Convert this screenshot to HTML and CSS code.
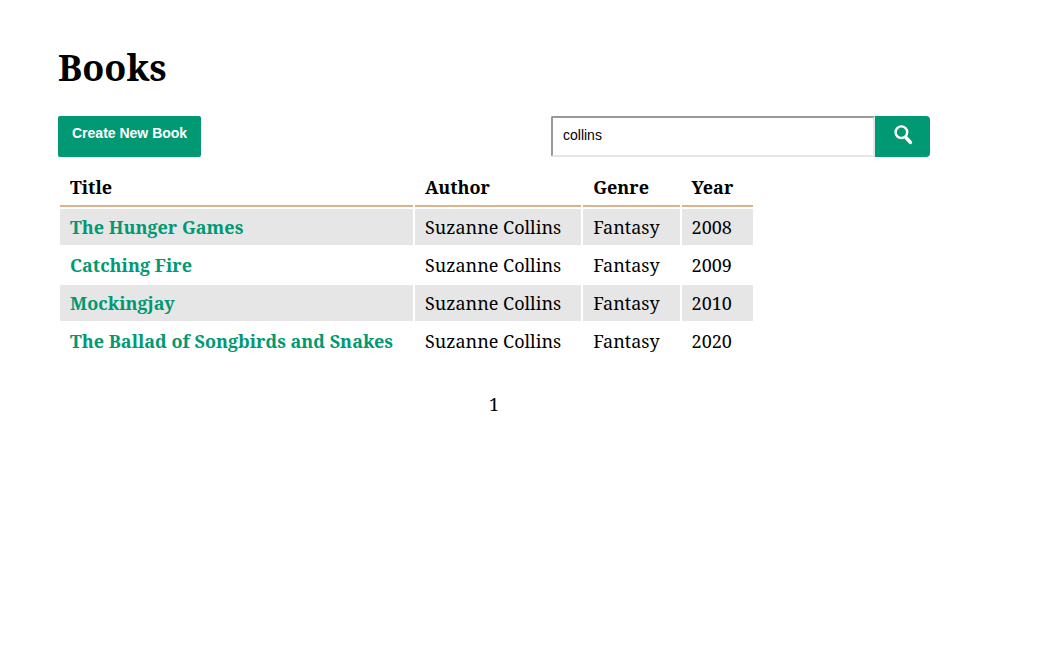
FILE: index.html
```html
<!DOCTYPE html>
<html lang="en">
<head>
<meta charset="utf-8">
<title>Books</title>
<link rel="stylesheet" href="styles.css">
</head>
<body>
<main class="page">
  <h1 class="title">Books</h1>
  <div class="toolbar">
    <button class="button create" type="button">Create New Book</button>
    <form class="search">
      <input class="search-input" type="text" aria-label="Search books" value="collins">
      <button class="button search-button" type="submit" aria-label="Search">
        <svg class="icon" viewBox="0 0 20 20" width="20" height="20" aria-hidden="true">
          <circle cx="8.4" cy="7.2" r="5.8" fill="none" stroke="#fff" stroke-width="2.4"/>
          <path d="M12 11.5L14 13.5" stroke="#fff" stroke-width="2.4"/>
          <path d="M13.6 13.2L17.4 17.4" stroke="#fff" stroke-width="3.6" stroke-linecap="round"/>
        </svg>
      </button>
    </form>
  </div>
  <table class="books">
    <thead>
      <tr><th>Title</th><th>Author</th><th>Genre</th><th>Year</th></tr>
    </thead>
    <tbody>
      <tr><td><a href="#">The Hunger Games</a></td><td>Suzanne Collins</td><td>Fantasy</td><td>2008</td></tr>
      <tr><td><a href="#">Catching Fire</a></td><td>Suzanne Collins</td><td>Fantasy</td><td>2009</td></tr>
      <tr><td><a href="#">Mockingjay</a></td><td>Suzanne Collins</td><td>Fantasy</td><td>2010</td></tr>
      <tr><td><a href="#">The Ballad of Songbirds and Snakes</a></td><td>Suzanne Collins</td><td>Fantasy</td><td>2020</td></tr>
    </tbody>
  </table>
  <nav class="pages" aria-label="Pages">1</nav>
</main>
</body>
</html>
```
FILE: styles.css
```css
body { margin: 0; background: #fff; color: #000; font: 18px/26px "Noto Serif", "Droid Serif", "DejaVu Serif", serif; }
.page { padding: 40px 117px 40px 58px; }
.title { margin: 0 0 20px; font-size: 36px; line-height: 56px; }
.toolbar { display: flex; justify-content: space-between; margin-bottom: 10px; }
.button { border: 0; background: #009973; color: #fff; font: bold 14px/16px "Liberation Sans", Arial, sans-serif; }
.create { height: 41px; padding: 0 14px 8px; border-radius: 2px; }
.search { display: flex; }
.search-input { box-sizing: border-box; width: 324px; height: 41px; padding: 0 10px 4px; border: 2px solid; border-color: #999 #e6e6e6 #e6e6e6 #999; border-radius: 2px 0 0 2px; font: 14px "Liberation Sans", Arial, sans-serif; }
.search-button { width: 55px; height: 41px; padding: 0 0 4px; border-radius: 0 4px 4px 0; }
.icon { display: inline-block; vertical-align: middle; }
.books { border-spacing: 2px; }
.books th, .books td { padding: 5px 20px 5px 10px; text-align: left; }
.books th { border-bottom: 2px solid #d9b38c; }
.books tbody tr:nth-child(odd) { background: #e6e6e6; }
.books a { color: #009973; font-weight: bold; text-decoration: none; }
.pages { margin-top: 30px; text-align: center; }
```
